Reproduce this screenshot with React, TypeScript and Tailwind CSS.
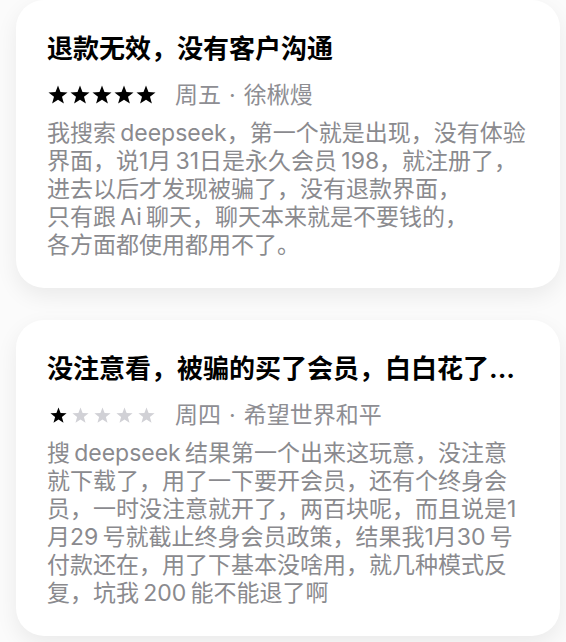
import React from "react";

type Review = {
  title: string;
  rating: number;
  starSize: number;
  day: string;
  author: string;
  lines: string[];
};

const reviews: Review[] = [
  {
    title: "退款无效，没有客户沟通",
    rating: 5,
    starSize: 20,
    day: "周五",
    author: "徐楸熳",
    lines: [
      "我搜索\u2009deepseek，第一个就是出现，没有体验",
      "界面，说1月\u200931日是永久会员\u2009198，就注册了，",
      "进去以后才发现被骗了，没有退款界面，",
      "只有跟\u2009Ai\u2009聊天，聊天本来就是不要钱的，",
      "各方面都使用都用不了。",
    ],
  },
  {
    title: "没注意看，被骗的买了会员，白白花了...",
    rating: 1,
    starSize: 17,
    day: "周四",
    author: "希望世界和平",
    lines: [
      "搜\u2009deepseek\u2009结果第一个出来这玩意，没注意",
      "就下载了，用了一下要开会员，还有个终身会",
      "员，一时没注意就开了，两百块呢，而且说是1",
      "月29\u2009号就截止终身会员政策，结果我1月30\u2009号",
      "付款还在，用了下基本没啥用，就几种模式反",
      "复，坑我\u2009200\u2009能不能退了啊",
    ],
  },
];

function Star({ filled, size }: { filled: boolean; size: number }) {
  return (
    <span className="flex w-[22px] h-[22px] items-center justify-center">
      <svg width={size} height={size} viewBox="0 0 20 20">
        <polygon
          points="10,0.5 12.47,7.1 19.51,7.41 14,11.8 15.88,18.59 10,14.7 4.12,18.59 6,11.8 0.49,7.41 7.53,7.1"
          fill={filled ? "#000000" : "#d1d1d6"}
        />
      </svg>
    </span>
  );
}

function ReviewCard({ review }: { review: Review }) {
  return (
    <div className="w-[544px] rounded-[28px] bg-white pt-[33px] pb-[29px] pl-[31px] pr-[20px] shadow-[0_8px_22px_rgba(0,0,0,0.07)]">
      <h2 className="text-[26px] leading-[32px] font-bold text-black whitespace-nowrap">
        {review.title}
      </h2>
      <div className="mt-[16px] flex items-center h-[28px]">
        <div className="flex">
          {[1, 2, 3, 4, 5].map((i) => (
            <Star key={i} filled={i <= review.rating} size={review.starSize} />
          ))}
        </div>
        <span className="ml-[18px] flex items-center text-[23px] leading-[28px] text-[#8e8e93] whitespace-nowrap">
          <span>{review.day}</span>
          <span className="mx-[8px]">·</span>
          <span>{review.author}</span>
        </span>
      </div>
      <div className="mt-[10px] text-[23px] leading-[28px] text-[#8a8a8e]">
        {review.lines.map((line, i) => (
          <p key={i} className="whitespace-nowrap">
            {line}
          </p>
        ))}
      </div>
    </div>
  );
}

export default function App() {
  return (
    <div
      className="min-h-screen w-full bg-[#fbfbfb] pl-[16px] flex flex-col gap-[32px] overflow-hidden"
      style={{ fontFamily: 'Inter, "Noto Sans CJK SC", sans-serif' }}
    >
      {reviews.map((r, i) => (
        <ReviewCard key={i} review={r} />
      ))}
    </div>
  );
}
